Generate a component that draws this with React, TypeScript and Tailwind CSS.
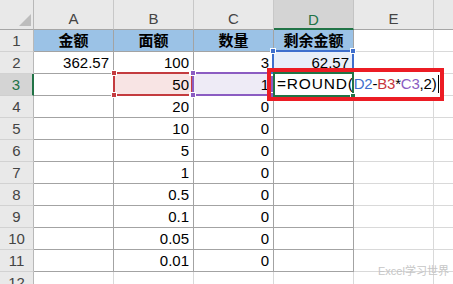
import React from "react";

const FONT = '"Liberation Sans", "Noto Sans CJK SC", sans-serif';
const COLS = ["A", "B", "C", "D", "E", "F"];

type Cell = { v?: string; bold?: boolean; center?: boolean };

const rows: Record<number, Record<string, Cell>> = {
  1: {
    A: { v: "金额", bold: true, center: true },
    B: { v: "面额", bold: true, center: true },
    C: { v: "数量", bold: true, center: true },
    D: { v: "剩余金额", bold: true, center: true },
  },
  2: { A: { v: "362.57" }, B: { v: "100" }, C: { v: "3" }, D: { v: "62.57" } },
  3: { B: { v: "50" }, C: { v: "1" } },
  4: { B: { v: "20" }, C: { v: "0" } },
  5: { B: { v: "10" }, C: { v: "0" } },
  6: { B: { v: "5" }, C: { v: "0" } },
  7: { B: { v: "1" }, C: { v: "0" } },
  8: { B: { v: "0.5" }, C: { v: "0" } },
  9: { B: { v: "0.1" }, C: { v: "0" } },
  10: { B: { v: "0.05" }, C: { v: "0" } },
  11: { B: { v: "0.01" }, C: { v: "0" } },
  12: {},
};

function cellBg(r: number, c: string): string {
  if (r === 1 && ["A", "B", "C", "D"].includes(c)) return "bg-[#9bc2e6]";
  if (r === 2 && c === "D") return "bg-[#e8eef9]";
  if (r === 3 && c === "B") return "bg-[#f8e4e4]";
  if (r === 3 && c === "C") return "bg-[#eeebf6]";
  return "bg-white";
}

function Handle({ x, y, color }: { x: number; y: number; color: string }) {
  return (
    <div
      className="absolute w-[6px] h-[6px] border border-white"
      style={{ left: x - 3, top: y - 3, backgroundColor: color }}
    />
  );
}

function RefBox({
  x,
  y,
  w,
  h,
  color,
}: {
  x: number;
  y: number;
  w: number;
  h: number;
  color: string;
}) {
  return (
    <>
      <div
        className="absolute border-2"
        style={{ left: x, top: y, width: w, height: h, borderColor: color }}
      />
      <Handle x={x + 1} y={y + 1} color={color} />
      <Handle x={x + w - 1} y={y + 1} color={color} />
      <Handle x={x + 1} y={y + h - 1} color={color} />
      <Handle x={x + w - 1} y={y + h - 1} color={color} />
    </>
  );
}

export default function App() {
  return (
    <div
      className="relative w-[453px] h-[284px] overflow-hidden bg-white text-[15px] text-black"
      style={{ fontFamily: FONT }}
    >
      {/* column header row */}
      <div className="flex h-[30px]">
        <div className="relative w-[34px] shrink-0 h-[30px] bg-[#e9e9e9] border-r border-b border-r-[#b8b8b8] border-b-[#a6a6a6]">
          <svg className="absolute left-0 top-0" width="34" height="30">
            <polygon points="31,14 31,26 19,26" fill="#bdbdbd" />
          </svg>
        </div>
        {COLS.map((c) => (
          <div
            key={c}
            className={
              c === "D"
                ? "w-[80px] shrink-0 h-[30px] bg-[#d4d4d4] border-r border-r-[#c4c4c4] border-b-2 border-b-[#217346] text-[#217346] text-center pt-[9px] leading-[21px]"
                : "w-[80px] shrink-0 h-[30px] bg-[#e9e9e9] border-r border-r-[#c8c8c8] border-b border-b-[#a6a6a6] text-[#444] text-center pt-[9px] leading-[20px]"
            }
          >
            {c === "F" ? "" : c}
          </div>
        ))}
      </div>

      {Object.keys(rows).map((k) => {
        const r = Number(k);
        const data = rows[r];
        return (
          <div key={r} className="flex h-[22px]">
            <div
              className={
                r === 3
                  ? "w-[34px] shrink-0 h-[22px] bg-[#d4d4d4] border-r-2 border-r-[#217346] border-b border-b-[#cfcfcf] text-[#217346] text-center leading-[21px]"
                  : "w-[34px] shrink-0 h-[22px] bg-[#e9e9e9] border-r border-r-[#b8b8b8] border-b border-b-[#d2d2d2] text-[#444] text-center leading-[21px]"
              }
            >
              {r}
            </div>
            {COLS.map((c) => {
              const cell = data[c];
              const inTable = r <= 11 && ["A", "B", "C", "D"].includes(c);
              return (
                <div
                  key={c}
                  className={`w-[80px] shrink-0 h-[22px] border-r border-b overflow-hidden whitespace-nowrap leading-[21px] ${cellBg(
                    r,
                    c
                  )} ${inTable ? "border-r-[#a3a3a3] border-b-[#a3a3a3]" : "border-r-[#d9d9d9] border-b-[#d9d9d9]"} ${
                    cell?.center ? "text-center font-bold" : "text-right pr-[4px]"
                  }`}
                >
                  {cell?.v ?? ""}
                </div>
              );
            })}
          </div>
        );
      })}

      {/* reference highlight boxes */}
      <RefBox x={113} y={72} w={80} h={24} color="#c43b3f" />
      <RefBox x={192} y={72} w={81} h={24} color="#8b5cc2" />
      <RefBox x={272} y={50} w={82} h={23} color="#3f6fcd" />

      {/* in-cell editor */}
      <div className="absolute left-[273px] top-[72px] w-[168px] h-[25px] bg-white">
        <div className="flex items-start pt-[1px] pl-[4px] text-[15.5px] leading-[21px] whitespace-nowrap">
          <span className="tracking-[0.8px]">=ROUND(</span>
          <span className="flex items-start text-[15px] tracking-[-0.2px]">
            <span className="text-[#3f6fcd]">D2</span>
            <span>-</span>
            <span className="text-[#c8373d]">B3</span>
            <span>*</span>
            <span className="text-[#8b5cc2]">C3</span>
            <span>,2)</span>
          </span>
          <span className="ml-[1px] mt-[2px] w-[1px] h-[18px] bg-black" />
        </div>
      </div>
      <div className="absolute left-[273px] top-[72px] w-[81px] h-[25px] border-2 border-[#217346]" />
      <div className="absolute left-[350px] top-[93px] w-[6px] h-[6px] bg-[#217346] border border-white" />

      {/* red annotation rectangle */}
      <div className="absolute left-[267px] top-[68px] w-[177px] h-[33px] border-4 border-[#ec1c24]" />

      {/* watermark */}
      <div className="absolute left-[378px] top-[264px] text-[11px] leading-[14px] text-[#c6c6c6] whitespace-nowrap">
        Excel学习世界
      </div>
    </div>
  );
}
